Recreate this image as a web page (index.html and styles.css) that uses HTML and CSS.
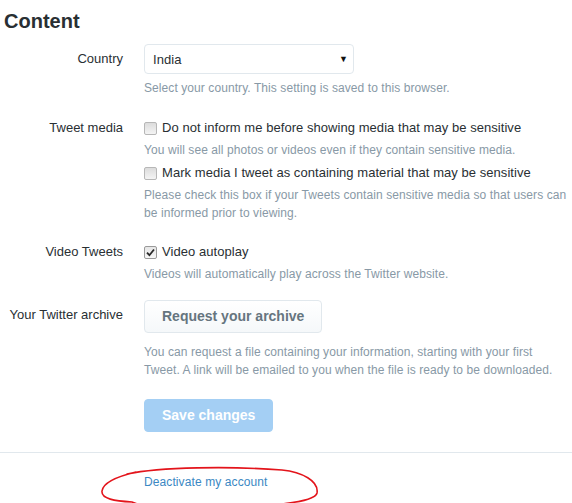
FILE: index.html
```html
<!DOCTYPE html>
<html>
<head>
<meta charset="utf-8">
<link rel="stylesheet" href="styles.css">
</head>
<body>
<div class="page">
  <h1 class="title">Content</h1>

  <div class="row row-country">
    <div class="label label-select">Country</div>
    <div class="control">
      <div class="select"><span>India</span><span class="arrow">▼</span></div>
      <p class="help help-select">Select your country. This setting is saved to this browser.</p>
    </div>
  </div>

  <div class="row row-media">
    <div class="label label-check">Tweet media</div>
    <div class="control">
      <div class="check"><span class="box"></span><span>Do not inform me before showing media that may be sensitive</span></div>
      <p class="help help-check">You will see all photos or videos even if they contain sensitive media.</p>
      <div class="check check-next"><span class="box"></span><span>Mark media I tweet as containing material that may be sensitive</span></div>
      <p class="help help-check">Please check this box if your Tweets contain sensitive media so that users can be informed prior to viewing.</p>
    </div>
  </div>

  <div class="row row-video">
    <div class="label label-check">Video Tweets</div>
    <div class="control">
      <div class="check"><span class="box checked"><svg width="9" height="9" viewBox="0 0 9 9"><path d="M1 4.6 L3.4 7.2 L8 1.5" fill="none" stroke="#2a2a2a" stroke-width="1.8"/></svg></span><span>Video autoplay</span></div>
      <p class="help help-check">Videos will automatically play across the Twitter website.</p>
    </div>
  </div>

  <div class="row row-archive">
    <div class="label label-button">Your Twitter archive</div>
    <div class="control">
      <div class="btn btn-default">Request your archive</div>
      <p class="help help-button">You can request a file containing your information, starting with your first Tweet. A link will be emailed to you when the file is ready to be downloaded.</p>
    </div>
  </div>

  <div class="row row-save">
    <div class="label"></div>
    <div class="control">
      <div class="btn btn-primary">Save changes</div>
    </div>
  </div>

  <div class="divider"></div>

  <div class="row row-deactivate">
    <div class="label"></div>
    <div class="control">
      <a class="link">Deactivate my account</a>
    </div>
  </div>

  <svg class="annotation" width="572" height="503" viewBox="0 0 572 503">
    <path d="M127 465 C160 458 230 457 282 461 C302 463 319 472 317 484 C315 494 270 497 210 499 C180 500 150 499 140 496 L132 493 C115 492 101 490 102 482 C103 474 115 468 136 463" fill="none" stroke="#e3141b" stroke-width="1.6" stroke-linecap="round"/>
  </svg>
</div>
</body>
</html>
```

FILE: styles.css
```css
* { box-sizing: border-box; }
html, body { margin: 0; padding: 0; background: #fff; }
body {
  font-family: "Liberation Sans", Arial, sans-serif;
  color: #292f33;
  width: 572px;
  height: 503px;
  overflow: hidden;
}
.page { position: relative; width: 572px; height: 503px; }
.title {
  margin: 9px 0 0 4px;
  font-size: 20px;
  line-height: 24px;
  font-weight: bold;
  color: #292f33;
}
.row {
  display: grid;
  grid-template-columns: 123px 1fr;
  column-gap: 21px;
}
.label {
  text-align: right;
  font-size: 13px;
  line-height: 18px;
  color: #292f33;
}
.label-select { padding-top: 6px; }
.label-check { padding-top: 1px; }
.label-button { padding-top: 6px; }
.control { min-width: 0; }
.row-country { margin-top: 11px; }
.select {
  width: 210px;
  height: 30px;
  border: 1px solid #e1e8ed;
  border-radius: 4px;
  display: flex;
  align-items: center;
  justify-content: space-between;
  padding: 0 5px 0 8px;
  font-size: 13px;
  letter-spacing: 0.05px;
  color: #292f33;
}
.arrow { font-size: 9px; color: #111; }
.help {
  margin: 0;
  font-size: 12px;
  line-height: 18px;
  letter-spacing: 0.08px;
  color: #8899a6;
}
.help-select { margin-top: 5px; }
.row-media { margin-top: 21px; }
.check {
  display: flex;
  align-items: center;
  gap: 5px;
  font-size: 13px;
  line-height: 20px;
  height: 20px;
  letter-spacing: 0.05px;
  color: #292f33;
}
.check-next { margin-top: 4px; }
.box {
  width: 13px;
  height: 13px;
  border: 1px solid #b7b7b7;
  border-radius: 2px;
  background: linear-gradient(#dcdcdc, #f4f4f4);
  display: flex;
  align-items: center;
  justify-content: center;
  flex: none;
}
.box.checked { background: linear-gradient(#e6e6e6, #f7f7f7); border-color: #9a9a9a; }
.help-check { margin-top: 3px; }
.row-video { margin-top: 20px; }
.row-archive { margin-top: 17px; }
.btn {
  display: inline-block;
  height: 33px;
  line-height: 31px;
  padding: 0 17px;
  border-radius: 4px;
  font-size: 14px;
  font-weight: bold;
}
.btn-default {
  background: linear-gradient(#fff, #f5f8fa);
  border: 1px solid #e1e8ed;
  color: #66757f;
}
.btn-primary {
  background: #a4cff4;
  border: 1px solid #a4cff4;
  color: #fff;
}
.help-button { margin-top: 10px; max-width: 412px; }
.row-save { margin-top: 20px; }
.divider {
  margin-top: 20px;
  height: 1px;
  background: #e1e8ed;
}
.row-deactivate { margin-top: 19px; }
.link {
  font-size: 12px;
  line-height: 18px;
  letter-spacing: 0.1px;
  color: #3b88c3;
  text-decoration: none;
}
.annotation { position: absolute; left: 0; top: 0; pointer-events: none; }
```
